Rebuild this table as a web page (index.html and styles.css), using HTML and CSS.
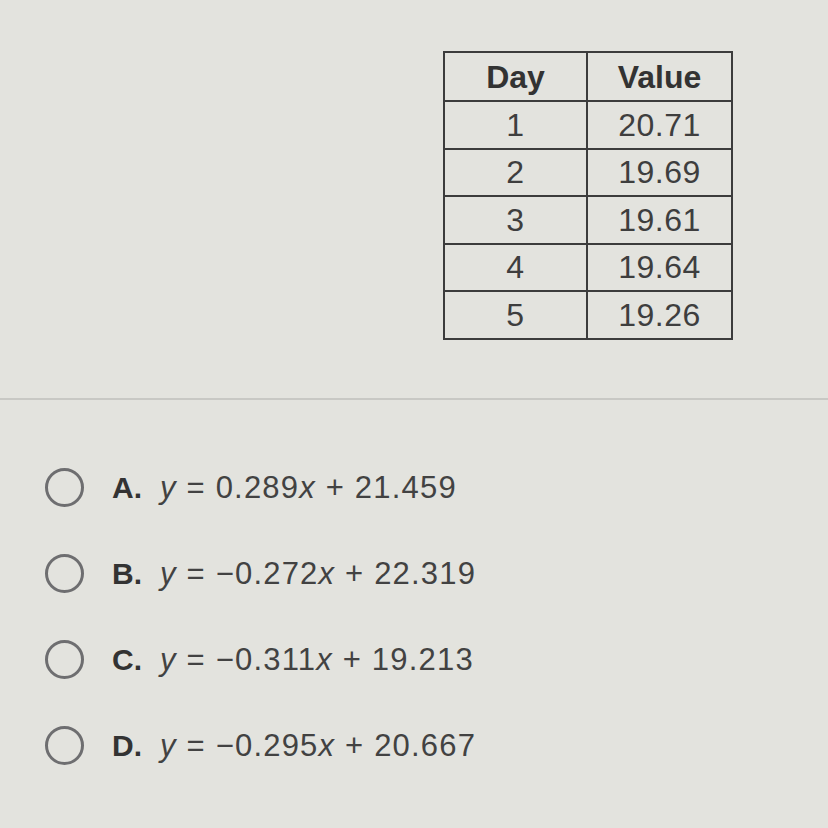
FILE: index.html
```html
<!DOCTYPE html>
<html>
<head>
<meta charset="utf-8">
<link rel="stylesheet" href="styles.css">
</head>
<body>
<div class="page">
  <div class="table-wrap">
    <table class="data">
      <thead>
        <tr><th class="c1">Day</th><th class="c2">Value</th></tr>
      </thead>
      <tbody>
        <tr><td>1</td><td>20.71</td></tr>
        <tr><td>2</td><td>19.69</td></tr>
        <tr><td>3</td><td>19.61</td></tr>
        <tr><td>4</td><td>19.64</td></tr>
        <tr><td>5</td><td>19.26</td></tr>
      </tbody>
    </table>
  </div>
  <div class="divider"></div>
  <ul class="options">
    <li class="option"><span class="radio"></span><span class="letter">A.</span><span class="eq"><i>y</i> = 0.289<i>x</i> + 21.459</span></li>
    <li class="option"><span class="radio"></span><span class="letter">B.</span><span class="eq"><i>y</i> = −0.272<i>x</i> + 22.319</span></li>
    <li class="option"><span class="radio"></span><span class="letter">C.</span><span class="eq"><i>y</i> = −0.311<i>x</i> + 19.213</span></li>
    <li class="option"><span class="radio"></span><span class="letter">D.</span><span class="eq"><i>y</i> = −0.295<i>x</i> + 20.667</span></li>
  </ul>
</div>
</body>
</html>
```
FILE: styles.css
```css
html, body {
  margin: 0;
  padding: 0;
  background: #e3e3de;
}
body {
  width: 828px;
  height: 828px;
  overflow: hidden;
  font-family: "Liberation Sans", Arial, sans-serif;
  color: #3a3a3a;
}
.page {
  display: flex;
  flex-direction: column;
}
.table-wrap {
  display: flex;
  justify-content: flex-end;
  padding: 51px 95px 0 0;
}
.data {
  border-collapse: collapse;
  border: 2px solid #3c3c3c;
  font-size: 32px;
}
.data th, .data td {
  border: 2px solid #3c3c3c;
  text-align: center;
  padding: 0;
  line-height: 1;
}
.data th {
  height: 47px;
  font-weight: bold;
  color: #333;
}
.data td {
  height: 45.5px;
  color: #3e3e3e;
  letter-spacing: 0.5px;
}
.c1 { width: 141px; }
.c2 { width: 143px; }
.divider {
  margin-top: 58px;
  height: 2px;
  background: #c8c8c4;
}
.options {
  list-style: none;
  margin: 0;
  padding: 45px 0 0 45px;
  display: flex;
  flex-direction: column;
}
.option {
  height: 86px;
  display: flex;
  align-items: center;
}
.radio {
  width: 33px;
  height: 33px;
  border: 3px solid #6e6e70;
  border-radius: 50%;
  margin-right: 28px;
  flex: none;
}
.letter {
  font-size: 30px;
  font-weight: bold;
  color: #333;
  width: 48px;
}
.eq {
  font-size: 31px;
  letter-spacing: 1.2px;
  color: #424242;
}
.eq i {
  font-style: italic;
}
```
